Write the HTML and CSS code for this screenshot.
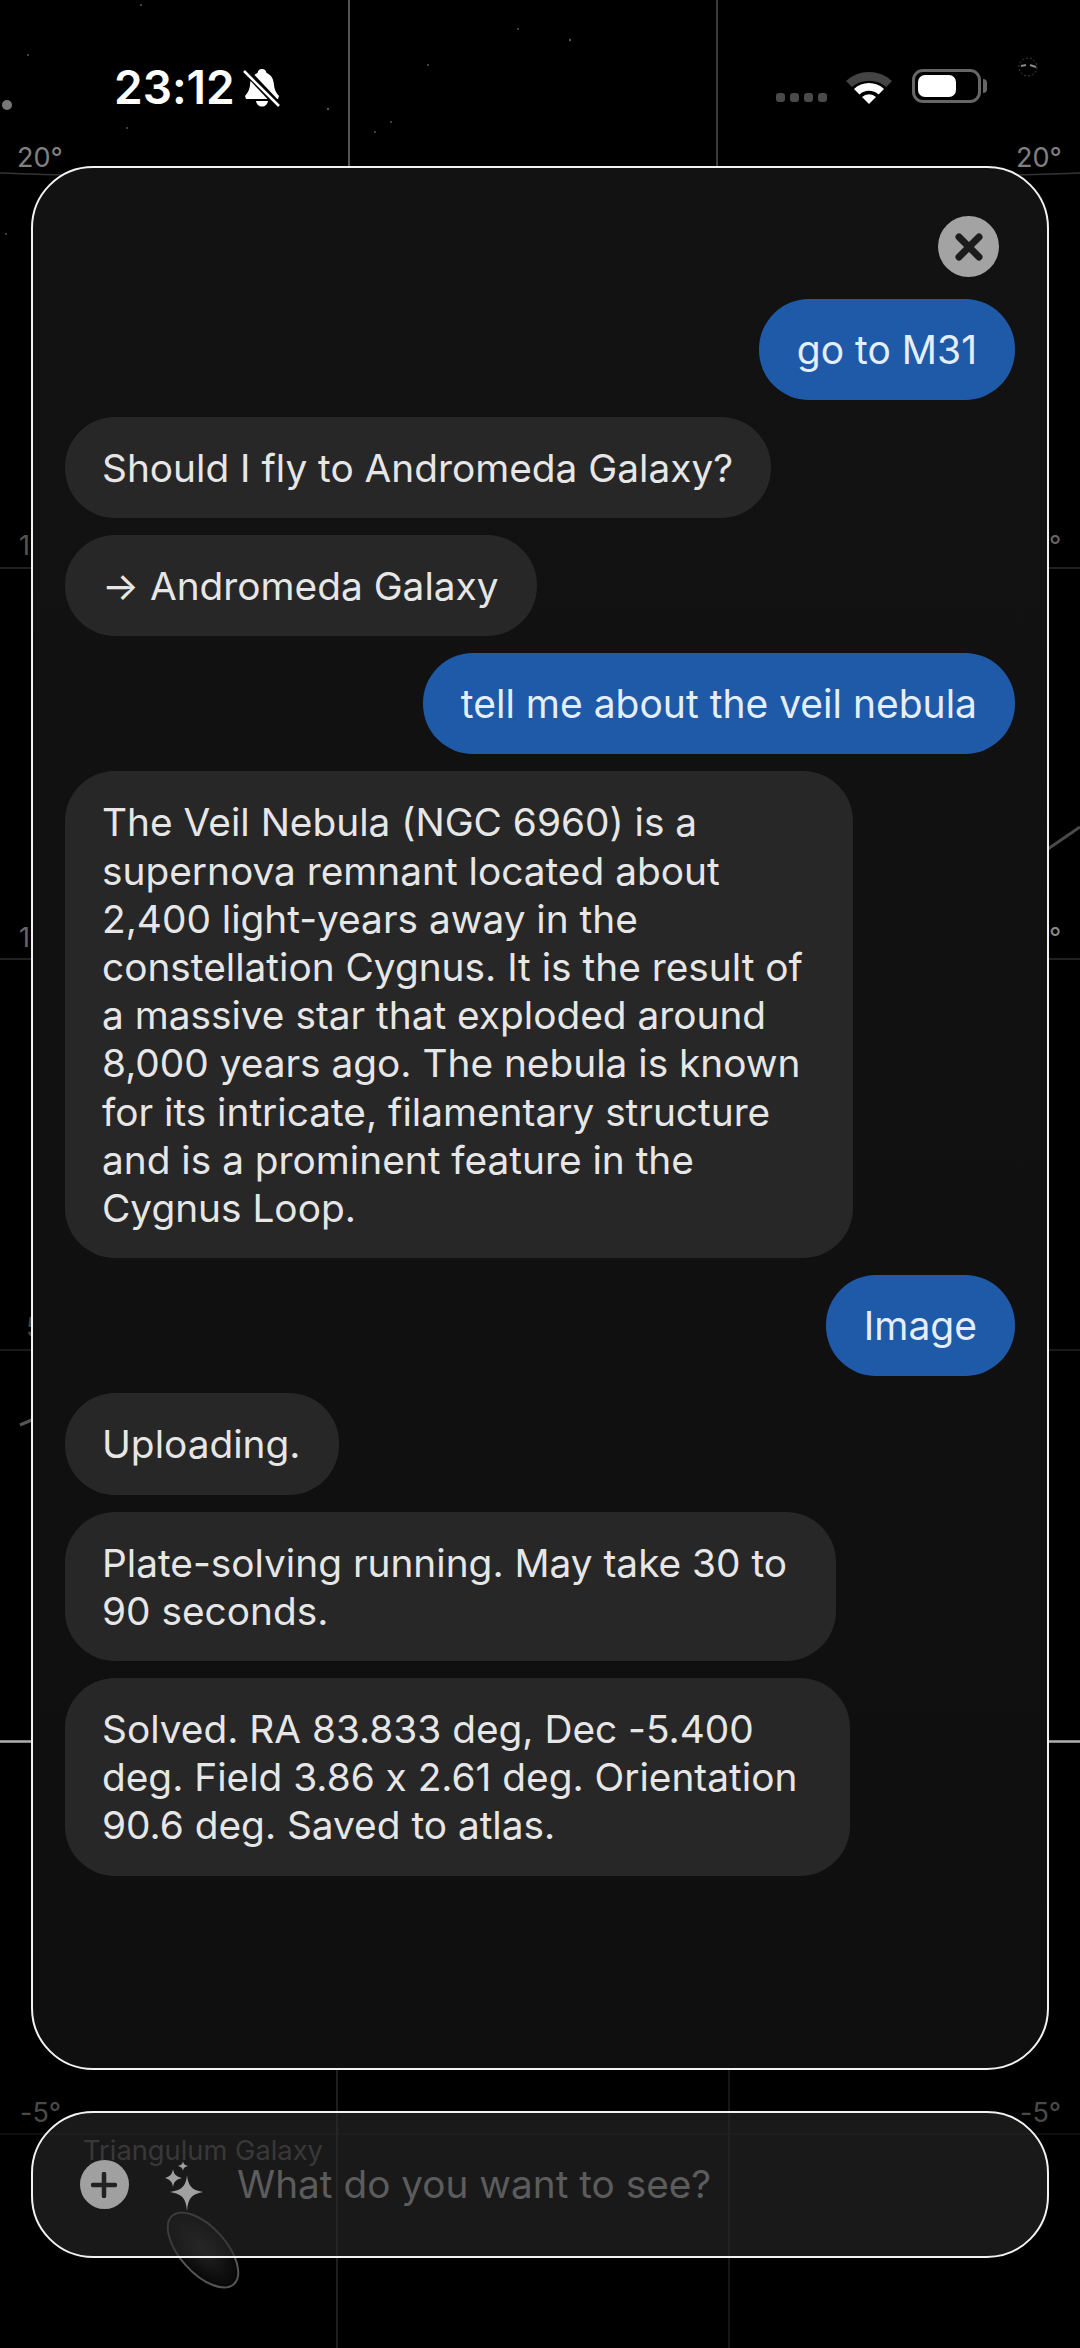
FILE: index.html
```html
<!DOCTYPE html>
<html lang="en">
<head>
  <meta charset="UTF-8">
  <meta name="viewport" content="width=device-width, initial-scale=1.0">
  <title>Sky chat</title>
  <link rel="stylesheet" href="styles.css">
</head>
<body>
  <!-- star chart behind everything -->
  <svg class="sky" width="1080" height="2348" viewBox="0 0 1080 2348">
    <g fill="none">
      <path d="M0 173 Q120 178 540 178 T1080 173" stroke="#333" stroke-width="1.5"/>
      <path d="M0 568H1080M0 959H1080" stroke="#2c2c2c" stroke-width="1.5"/>
      <path d="M0 1350H1080" stroke="#222" stroke-width="1.5"/>
      <path d="M0 1741.5H1080" stroke="#b0b0b0" stroke-width="2.5"/>
      <path d="M0 2134H1080" stroke="#131313" stroke-width="1.5"/>
      <path d="M349 0V170" stroke="#555" stroke-width="2"/>
      <path d="M717 0V170" stroke="#3a3a3a" stroke-width="2"/>
      <path d="M337 2065V2348" stroke="#1e1e1e" stroke-width="2"/>
      <path d="M729 2065V2348" stroke="#161616" stroke-width="2"/>
      <path d="M1045 851L1080 827" stroke="#4a4a4a" stroke-width="3"/>
      <path d="M20 1425L34 1419" stroke="#555" stroke-width="3"/>
    </g>
    <circle cx="7" cy="105" r="5" fill="#777"/>
    <g fill="#555">
      <circle cx="141" cy="5" r="1"/><circle cx="28" cy="55" r="1"/><circle cx="328" cy="109" r="1.2"/>
      <circle cx="127" cy="128" r="1"/><circle cx="518" cy="29" r="1"/><circle cx="428" cy="65" r="1"/>
      <circle cx="391" cy="122" r="1"/><circle cx="375" cy="132" r="1"/><circle cx="6" cy="234" r="1"/>
      <circle cx="570" cy="40" r="1.2"/>
    </g>
    <circle cx="1028" cy="67" r="9" fill="none" stroke="#444" stroke-width="1" stroke-dasharray="2 2"/>
    <path d="M1021 66l5-1M1030 65l6 2" stroke="#888" stroke-width="2" fill="none"/>
    <defs>
      <radialGradient id="glow">
        <stop offset="0" stop-color="#222"/>
        <stop offset="1" stop-color="#070707"/>
      </radialGradient>
    </defs>
    <ellipse cx="203" cy="2250" rx="46" ry="23" transform="rotate(48 203 2250)" fill="url(#glow)" stroke="#555" stroke-width="2"/>
    <g class="sky-label">
      <text x="17" y="167" fill="#808080">20°</text>
      <text x="1016" y="167" fill="#808080">20°</text>
      <text x="19" y="555" fill="#555">1</text>
      <text x="1049" y="555" fill="#666">°</text>
      <text x="19" y="947" fill="#666">1</text>
      <text x="1049" y="947" fill="#888">°</text>
      <text x="26" y="1337" fill="#444">5</text>
      <text x="20" y="2122" fill="#4a4a4a">-5°</text>
      <text x="1020" y="2122" fill="#4a4a4a">-5°</text>
      <text class="sky-name" x="83" y="2160" fill="#4e4e4e">Triangulum Galaxy</text>
    </g>
  </svg>

  <div class="screen">
    <header class="status">
      <div class="status-left">
        <span class="clock">23:12</span>
        <svg class="bell" width="38" height="40" viewBox="0 0 38 40">
          <path d="M19 1c2.500 0 4 1.500 4.500 4 5 2 7 6 7.500 12 .4 5 2 7.500 5 11l-1 3H3l-1-3c3-3.500 4.500-6 5-11 .5-6 2.500-10 7.500-12C15 2.500 16.500 1 19 1z" fill="#fff"/>
          <path d="M13 33h12c-.5 3.500-3 5.500-6 5.500s-5.500-2-6-5.500z" fill="#fff"/>
          <path d="M2 2L36 38" stroke="#000" stroke-width="7"/>
          <path d="M1 3L36 38" stroke="#fff" stroke-width="2.500"/>
        </svg>
      </div>
      <div class="status-right">
        <div class="signal"><i></i><i></i><i></i><i></i></div>
        <svg class="wifi" width="46" height="34" viewBox="0 0 46 34">
          <path d="M0 11A34 34 0 0 1 46 11L40 17A26 26 0 0 0 6 17Z" fill="#444"/>
          <path d="M8 19A22 22 0 0 1 38 19L32.500 24.500A14 14 0 0 0 13.500 24.500Z" fill="#fff"/>
          <path d="M16 27A10 10 0 0 1 30 27L23 34Z" fill="#fff"/>
        </svg>
        <div class="battery"><div class="battery-fill"></div></div>
      </div>
    </header>

    <main class="chat">
      <button class="close">
        <svg width="30" height="30" viewBox="0 0 30 30"><path d="M5 5L25 25M25 5L5 25" stroke="#1c1c1c" stroke-width="7" stroke-linecap="round"/></svg>
      </button>
      <div class="messages">
        <div class="bubble user">go to M31</div>
        <div class="bubble">Should I fly to Andromeda Galaxy?</div>
        <div class="bubble">→ Andromeda Galaxy</div>
        <div class="bubble user">tell me about the veil nebula</div>
        <div class="bubble veil">The Veil Nebula (NGC 6960) is a supernova remnant located about 2,400 light-years away in the constellation Cygnus. It is the result of a massive star that exploded around 8,000 years ago. The nebula is known for its intricate, filamentary structure and is a prominent feature in the Cygnus Loop.</div>
        <div class="bubble user">Image</div>
        <div class="bubble">Uploading.</div>
        <div class="bubble plate">Plate-solving running. May take 30 to 90 seconds.</div>
        <div class="bubble solved">Solved. RA 83.833 deg, Dec -5.400 deg. Field 3.86 x 2.61 deg. Orientation 90.6 deg. Saved to atlas.</div>
      </div>
    </main>

    <footer class="ask">
      <div class="plus">
        <svg width="26" height="26" viewBox="0 0 26 26"><path d="M13 2V24M2 13H24" stroke="#222" stroke-width="4.500" stroke-linecap="round"/></svg>
      </div>
      <svg class="sparkle" width="50" height="56" viewBox="0 0 50 56">
        <path d="M34 20C35 30 38 35 50 37C38 39 35 44 34 56C33 44 30 39 17 37C30 35 33 30 34 20Z" fill="#a0a0a0"/>
        <path d="M20 14C21 19 22 21 29 23C22 25 21 27 20 32C19 27 18 25 12 23C18 21 19 19 20 14Z" fill="#a0a0a0"/>
        <path d="M30 6C30.500 9 31.500 10 35 11C31.500 12 30.500 13 30 16C29.500 13 28.500 12 25 11C28.500 10 29.500 9 30 6Z" fill="#a0a0a0"/>
      </svg>
      <span class="placeholder">What do you want to see?</span>
    </footer>
  </div>
</body>
</html>
```

FILE: styles.css
```css
* {
  box-sizing: border-box;
}
body {
  margin: 0;
  height: 2348px;
  overflow: hidden;
  position: relative;
  background: #000;
  font-family: Inter, "Liberation Sans", sans-serif;
  font-feature-settings: "calt" 0;
}
.sky {
  position: absolute;
  top: 0;
  left: 0;
}
.sky-label {
  font-size: 27px;
}
.sky-name {
  font-size: 27.300px;
}
.screen {
  position: relative;
  display: flex;
  flex-direction: column;
  height: 100%;
  padding: 0 31px;
}

/* status bar */
.status {
  height: 166px;
  display: flex;
  justify-content: space-between;
  padding: 64px 68px 0 83px;
}
.status-left {
  display: flex;
  align-items: flex-start;
  gap: 8px;
}
.clock {
  color: #fff;
  font-size: 46px;
  font-weight: 600;
  line-height: 46px;
}
.bell {
  margin-top: 4px;
}
.status-right {
  display: flex;
  align-items: flex-start;
}
.signal {
  display: flex;
  gap: 5px;
  margin-top: 29px;
  margin-right: 19px;
}
.signal i {
  width: 9px;
  height: 9px;
  border-radius: 3px;
  background: #4a4a4a;
}
.wifi {
  margin-top: 6px;
  margin-right: 20px;
}
.battery {
  position: relative;
  width: 69px;
  height: 34px;
  margin-top: 5px;
  padding: 3px;
  border: 3px solid #666;
  border-radius: 11px;
}
.battery::after {
  content: "";
  position: absolute;
  right: -9px;
  top: 7px;
  width: 4px;
  height: 14px;
  border-radius: 0 4px 4px 0;
  background: #666;
}
.battery-fill {
  width: 38px;
  height: 100%;
  border-radius: 7px;
  background: #fff;
}

/* chat panel */
.chat {
  height: 1904px;
  padding: 48px 32px 0 31.500px;
  border: 2px solid #f2f2f2;
  border-radius: 62px;
  background: linear-gradient(#121212, #0f0f0f);
}
.close {
  display: flex;
  align-items: center;
  justify-content: center;
  width: 61px;
  height: 61px;
  margin: 0 16px 21.500px auto;
  padding: 0;
  border: none;
  border-radius: 50%;
  background: #a3a3a3;
}
.messages {
  display: flex;
  flex-direction: column;
  align-items: flex-start;
  gap: 17px;
}
.bubble {
  padding: 27px 38px 26px 37.500px;
  border-radius: 50px;
  background: #272727;
  color: #e6e6e6;
  font-size: 38.800px;
  line-height: 48.200px;
}
.user {
  align-self: flex-end;
  background: #1f5aa8;
  color: #e4eefa;
  font-size: 39px;
}
.veil {
  width: 788px;
}
.plate {
  width: 771px;
}
.solved {
  width: 785px;
}

/* input bar */
.ask {
  display: flex;
  align-items: flex-start;
  height: 147px;
  margin-top: 41px;
  padding: 47px 32px 0 46.500px;
  border: 2px solid #f2f2f2;
  border-radius: 62px;
  background: rgba(42, 42, 42, 0.6);
}
.plus {
  display: flex;
  align-items: center;
  justify-content: center;
  width: 49px;
  height: 49px;
  border-radius: 50%;
  background: #a0a0a0;
}
.sparkle {
  margin: -5px 0 0 24.500px;
}
.placeholder {
  margin-left: 34px;
  color: #5c5c5c;
  font-size: 38.750px;
  line-height: 48px;
}
```
